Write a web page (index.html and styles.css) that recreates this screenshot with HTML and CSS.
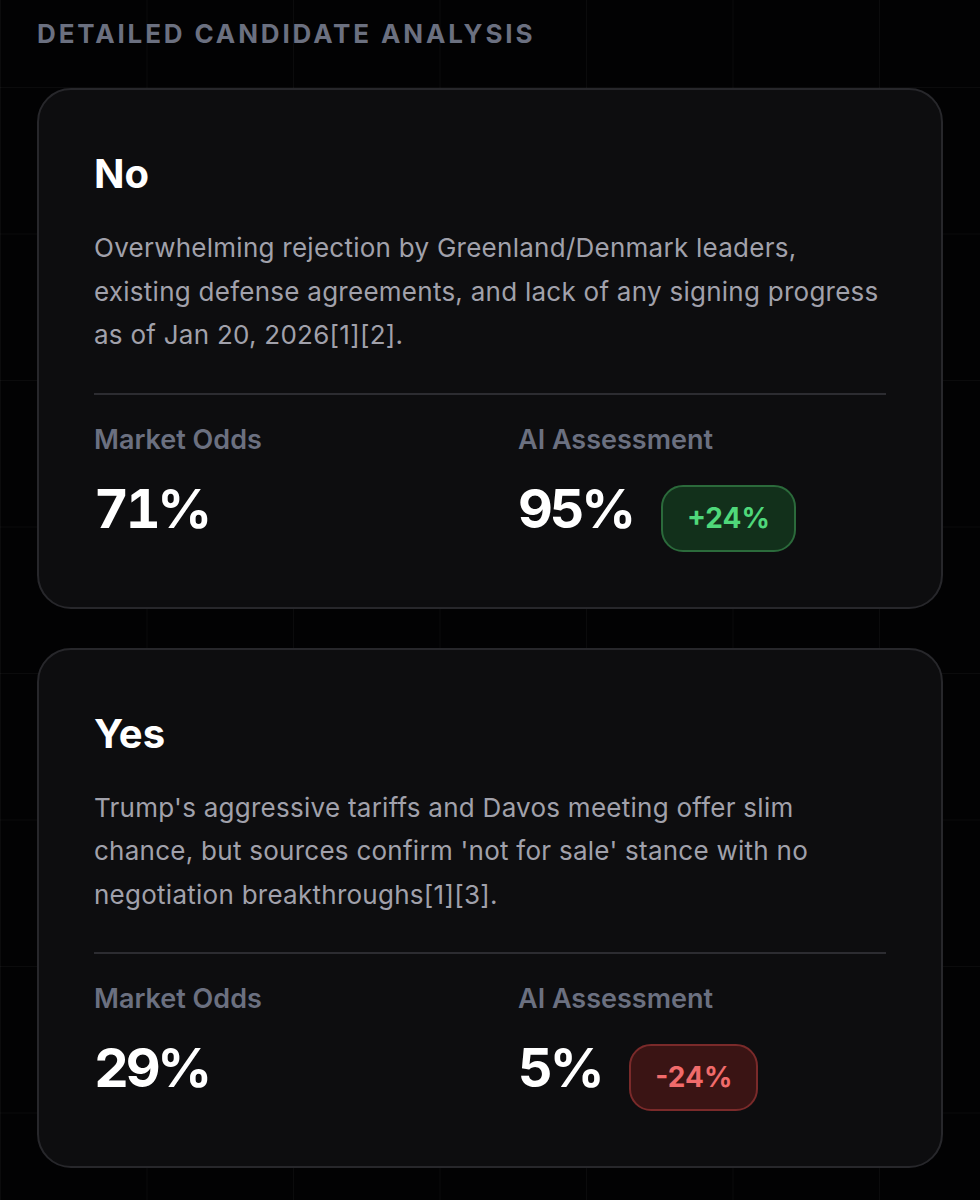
FILE: index.html
```html
<html>
  <head>
    <title>Detailed Candidate Analysis</title>
    <meta name="viewport" content="width=device-width, initial-scale=1">
    <link rel="stylesheet" href="styles.css">
  </head>
  <body>
    <main class="page">
      <h2 class="section-title">Detailed Candidate Analysis</h2>

      <section class="card">
        <h3 class="card-title">No</h3>
        <p class="card-text">Overwhelming rejection by Greenland/Denmark leaders, existing defense agreements, and lack of any signing progress as of Jan 20, 2026[1][2].</p>
        <div class="stats">
          <div class="stat">
            <span class="stat-label">Market Odds</span>
            <div class="stat-row">
              <span class="stat-value">71%</span>
            </div>
          </div>
          <div class="stat">
            <span class="stat-label">AI Assessment</span>
            <div class="stat-row">
              <span class="stat-value">95%</span>
              <span class="delta delta-up">+24%</span>
            </div>
          </div>
        </div>
      </section>

      <section class="card">
        <h3 class="card-title">Yes</h3>
        <p class="card-text">Trump's aggressive tariffs and Davos meeting offer slim chance, but sources confirm 'not for sale' stance with no negotiation breakthroughs[1][3].</p>
        <div class="stats">
          <div class="stat">
            <span class="stat-label">Market Odds</span>
            <div class="stat-row">
              <span class="stat-value">29%</span>
            </div>
          </div>
          <div class="stat">
            <span class="stat-label">AI Assessment</span>
            <div class="stat-row">
              <span class="stat-value">5%</span>
              <span class="delta delta-down">-24%</span>
            </div>
          </div>
        </div>
      </section>
    </main>
  </body>
</html>
```

FILE: styles.css
```css
body {
  background-color: #020203;
  background-image:
    linear-gradient(90deg, rgba(255, 255, 255, 0.035) 1px, transparent 1px),
    linear-gradient(0deg, rgba(255, 255, 255, 0.035) 1px, transparent 1px);
  background-position: 0 88px;
  background-size: 146.5px 146.5px;
  font-family: Inter, "Noto Sans", sans-serif;
  margin: 0;
  min-height: 1200px;
}

.page {
  display: flex;
  flex-direction: column;
  gap: 39px;
  padding: 18px 37px 40px;
}

.section-title {
  color: #6b7080;
  font-size: 26px;
  font-weight: 700;
  letter-spacing: 0.11em;
  line-height: 31px;
  margin: 0;
  text-transform: uppercase;
}

.card {
  background: #0d0d0f;
  border: 2px solid #27272b;
  border-radius: 34px;
  display: flex;
  flex-direction: column;
  padding: 60px 55px 55px;
}

.card-title {
  color: #ffffff;
  font-size: 40px;
  font-weight: 700;
  line-height: 48px;
  margin: 0 0 28px;
}

.card-text {
  color: #a1a1ab;
  font-size: 26px;
  font-weight: 400;
  letter-spacing: 0.01em;
  line-height: 43.5px;
  margin: 0;
}

.stats {
  border-top: 2px solid #2c2c31;
  display: grid;
  gap: 56px;
  grid-template-columns: 1fr 1fr;
  margin-top: 36px;
  padding-top: 29px;
}

.stat {
  display: flex;
  flex-direction: column;
  gap: 19px;
}

.stat-label {
  color: #6b7080;
  font-size: 27px;
  font-weight: 600;
  line-height: 32px;
}

.stat-row {
  align-items: baseline;
  display: flex;
  gap: 28px;
}

.stat-value {
  color: #ffffff;
  font-feature-settings: "tnum";
  font-size: 54px;
  font-weight: 700;
  letter-spacing: -0.06em;
  line-height: 67px;
}

.delta {
  border: 2px solid;
  border-radius: 22px;
  font-size: 28px;
  font-weight: 700;
  line-height: 63px;
  padding: 0 24px;
}

.delta-up {
  background: #12301b;
  border-color: #2b6a3b;
  color: #4fd87a;
}

.delta-down {
  background: #3a1414;
  border-color: #7a2a2a;
  color: #f06b6b;
}
```
